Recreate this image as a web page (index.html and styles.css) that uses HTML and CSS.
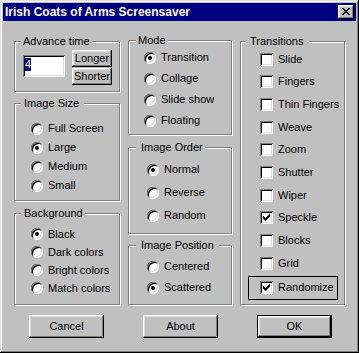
FILE: index.html
```html
<!DOCTYPE html>
<html>
<head>
<meta charset="utf-8">
<title>Irish Coats of Arms Screensaver</title>
<link rel="stylesheet" href="styles.css">
</head>
<body>
<div class="window">
  <div class="titlebar">
    <span class="title">Irish Coats of Arms Screensaver</span>
    <span class="close"><svg width="8" height="7" viewBox="0 0 8 7" shape-rendering="crispEdges"><path d="M0 0h2v1h-2z M6 0h2v1h-2z M1 1h2v1h-2z M5 1h2v1h-2z M2 2h4v1h-4z M3 3h2v1h-2z M2 4h4v1h-4z M1 5h2v1h-2z M5 5h2v1h-2z M0 6h2v1h-2z M6 6h2v1h-2z" fill="#000"/></svg></span>
  </div>
  <div class="content">
    <div class="columns">
      <div class="col">
        <div class="group g-adv">
          <div class="legend lg-adv">Advance time</div>
          <div class="adv-row">
            <div class="field"><span class="sel">4</span></div>
            <div class="adv-btns">
              <div class="btn btn-small">Longer</div>
              <div class="btn btn-small">Shorter</div>
            </div>
          </div>
        </div>
        <div class="group g-size">
          <div class="legend lg-size">Image Size</div>
          <div class="opts opts-size">
            <div class="opt"><span class="radio"></span>Full Screen</div>
            <div class="opt"><span class="radio on"></span>Large</div>
            <div class="opt"><span class="radio"></span>Medium</div>
            <div class="opt"><span class="radio"></span>Small</div>
          </div>
        </div>
        <div class="group g-bg">
          <div class="legend lg-bg">Background</div>
          <div class="opts opts-bg">
            <div class="opt"><span class="radio on"></span>Black</div>
            <div class="opt"><span class="radio"></span>Dark colors</div>
            <div class="opt"><span class="radio"></span>Bright colors</div>
            <div class="opt"><span class="radio"></span>Match colors</div>
          </div>
        </div>
      </div>
      <div class="col">
        <div class="group g-mode">
          <div class="legend lg-mode">Mode</div>
          <div class="opts opts-mode">
            <div class="opt"><span class="radio on"></span>Transition</div>
            <div class="opt"><span class="radio"></span>Collage</div>
            <div class="opt"><span class="radio"></span>Slide show</div>
            <div class="opt"><span class="radio"></span>Floating</div>
          </div>
        </div>
        <div class="group g-order">
          <div class="legend lg-order">Image Order</div>
          <div class="opts opts-order">
            <div class="opt"><span class="radio on"></span>Normal</div>
            <div class="opt"><span class="radio"></span>Reverse</div>
            <div class="opt"><span class="radio"></span>Random</div>
          </div>
        </div>
        <div class="group g-pos">
          <div class="legend lg-pos">Image Position</div>
          <div class="opts opts-pos">
            <div class="opt"><span class="radio"></span>Centered</div>
            <div class="opt"><span class="radio on"></span>Scattered</div>
          </div>
        </div>
      </div>
      <div class="col">
        <div class="group g-trans">
          <div class="legend lg-trans">Transitions</div>
          <div class="opts opts-trans">
            <div class="opt"><span class="check"></span>Slide</div>
            <div class="opt"><span class="check"></span>Fingers</div>
            <div class="opt"><span class="check"></span>Thin Fingers</div>
            <div class="opt"><span class="check"></span>Weave</div>
            <div class="opt"><span class="check"></span>Zoom</div>
            <div class="opt"><span class="check"></span>Shutter</div>
            <div class="opt"><span class="check"></span>Wiper</div>
            <div class="opt"><span class="check"><svg width="7" height="7" viewBox="0 0 7 7" shape-rendering="crispEdges"><path d="M6 0h1v1h-1z M5 1h2v1h-2z M0 2h1v1h-1z M4 2h3v1h-3z M0 3h2v1h-2z M3 3h3v1h-3z M0 4h5v1h-5z M1 5h3v1h-3z M2 6h1v1h-1z" fill="#000"/></svg></span>Speckle</div>
            <div class="opt"><span class="check"></span>Blocks</div>
            <div class="opt"><span class="check"></span>Grid</div>
          </div>
          <div class="focus">
            <div class="opt"><span class="check"><svg width="7" height="7" viewBox="0 0 7 7" shape-rendering="crispEdges"><path d="M6 0h1v1h-1z M5 1h2v1h-2z M0 2h1v1h-1z M4 2h3v1h-3z M0 3h2v1h-2z M3 3h3v1h-3z M0 4h5v1h-5z M1 5h3v1h-3z M2 6h1v1h-1z" fill="#000"/></svg></span>Randomize</div>
          </div>
        </div>
      </div>
    </div>
    <div class="buttons">
      <div class="btn btn-main">Cancel</div>
      <div class="btn btn-main">About</div>
      <div class="btn btn-main btn-default">OK</div>
    </div>
  </div>
</div>
</body>
</html>
```
FILE: styles.css
```css
* { box-sizing: border-box; }
html, body { margin: 0; padding: 0; }
body {
  font-family: "Liberation Sans", Arial, sans-serif;
  font-size: 11px;
  line-height: 13px;
  color: #000;
  background: #c0c0c0;
}
.window {
  width: 359px;
  height: 353px;
  padding: 3px;
  background: #c0c0c0;
  box-shadow: inset -1px -1px #000, inset 1px 1px #dfdfdf, inset -2px -2px #808080, inset 2px 2px #fff;
}
.titlebar {
  height: 18px;
  background: #000080;
  color: #fff;
  display: flex;
  align-items: center;
  padding: 0 2px 0 2px;
}
.title {
  flex: 1;
  font-weight: bold;
  font-size: 12px;
  line-height: 18px;
  white-space: nowrap;
}
.close {
  width: 16px;
  height: 14px;
  background: #c0c0c0;
  box-shadow: inset -1px -1px #000, inset 1px 1px #fff, inset -2px -2px #808080, inset 2px 2px #dfdfdf;
  padding: 3px 0 0 4px;
}
.close svg, .check svg { display: block; }

.content { padding: 20px 0 0 11px; }
.columns {
  display: grid;
  grid-template-columns: 106px 104px 105px;
  column-gap: 8px;
  align-items: start;
}
.col { display: flex; flex-direction: column; }

.group {
  border: 1px solid #808080;
  box-shadow: inset 1px 1px #fff, 1px 1px #fff;
}
.legend {
  width: fit-content;
  height: 13px;
  margin: -7px 0 0 6px;
  padding: 0 2px;
  background: #c0c0c0;
  white-space: nowrap;
}
.lg-size { padding: 0 5px 0 3px; }
.lg-bg { padding: 0 2px 0 3px; }
.lg-mode { margin-left: 7px; }
.lg-order { margin-left: 7px; padding: 0 2px 0 5px; }
.lg-pos { margin-left: 7px; padding: 0 5px 0 5px; }
.lg-trans { margin-left: 5px; padding: 0 6px 0 4px; }

.g-adv { height: 51px; }
.g-size { height: 98px; margin-top: 11px; }
.g-bg { height: 92px; margin-top: 12px; }
.g-mode { height: 95px; margin-top: -1px; }
.g-order { height: 87px; margin-top: 12px; }
.g-pos { height: 60px; margin-top: 11px; }
.g-trans { height: 264px; }

.adv-row { display: flex; align-items: flex-start; padding: 2px 0 0 8px; }
.field {
  width: 42px;
  height: 22px;
  margin-top: 5px;
  padding: 3px 0 0 2px;
  background: #fff;
  box-shadow: inset 1px 1px #808080, inset -1px -1px #fff, inset 2px 2px #000, inset -2px -2px #dfdfdf;
}
.sel { background: #000080; color: #fff; display: inline-block; }
.adv-btns { display: flex; flex-direction: column; gap: 1px; margin-left: 7px; }

.btn {
  display: flex;
  align-items: center;
  justify-content: center;
  background: #c0c0c0;
  box-shadow: inset -1px -1px #000, inset 1px 1px #fff, inset -2px -2px #808080, inset 2px 2px #dfdfdf;
  white-space: nowrap;
}
.btn-small { width: 40px; height: 17px; }
.btn-main { width: 75px; height: 23px; }
.btn-default {
  box-shadow: inset 0 0 0 1px #000, inset -2px -2px #000, inset 2px 2px #fff, inset -3px -3px #808080, inset 3px 3px #dfdfdf;
}

.opt { display: flex; align-items: center; white-space: nowrap; }
.radio {
  flex: none;
  width: 12px;
  height: 12px;
  margin-right: 5px;
  border-radius: 50%;
  background: #fff;
  box-shadow: inset 1px 1px #808080, inset -1px -1px #fff, inset 2px 2px #000, inset -2px -2px #dfdfdf;
  display: flex;
  align-items: center;
  justify-content: center;
}
.radio.on::after {
  content: "";
  width: 4px;
  height: 4px;
  border-radius: 50%;
  background: #000;
}
.check {
  flex: none;
  width: 13px;
  height: 13px;
  margin-right: 5px;
  padding: 3px;
  background: #fff;
  box-shadow: inset 1px 1px #808080, inset -1px -1px #fff, inset 2px 2px #000, inset -2px -2px #dfdfdf;
}

.opts-size { padding: 9px 0 0 16px; }
.opts-size .opt { height: 19px; }
.opts-bg { padding: 5px 0 0 16px; }
.opts-bg .opt { height: 18px; }
.opts-mode { padding: 0 0 0 15px; }
.opts-mode .opt { height: 21px; }
.opts-order { padding: 4px 0 0 18px; }
.opts-order .opt { height: 23px; }
.opts-pos { padding: 4px 0 0 18px; }
.opts-pos .opt { height: 21px; }
.opts-trans { padding: 0 0 0 19px; }
.opts-trans .opt { height: 22.67px; }
.focus {
  width: 90px;
  height: 24px;
  margin: 1px 0 0 7px;
  padding-left: 11px;
  border: 1px solid #000;
  display: flex;
  align-items: center;
}

.buttons { display: flex; gap: 39px; padding-left: 15px; margin-top: 10px; }
```
